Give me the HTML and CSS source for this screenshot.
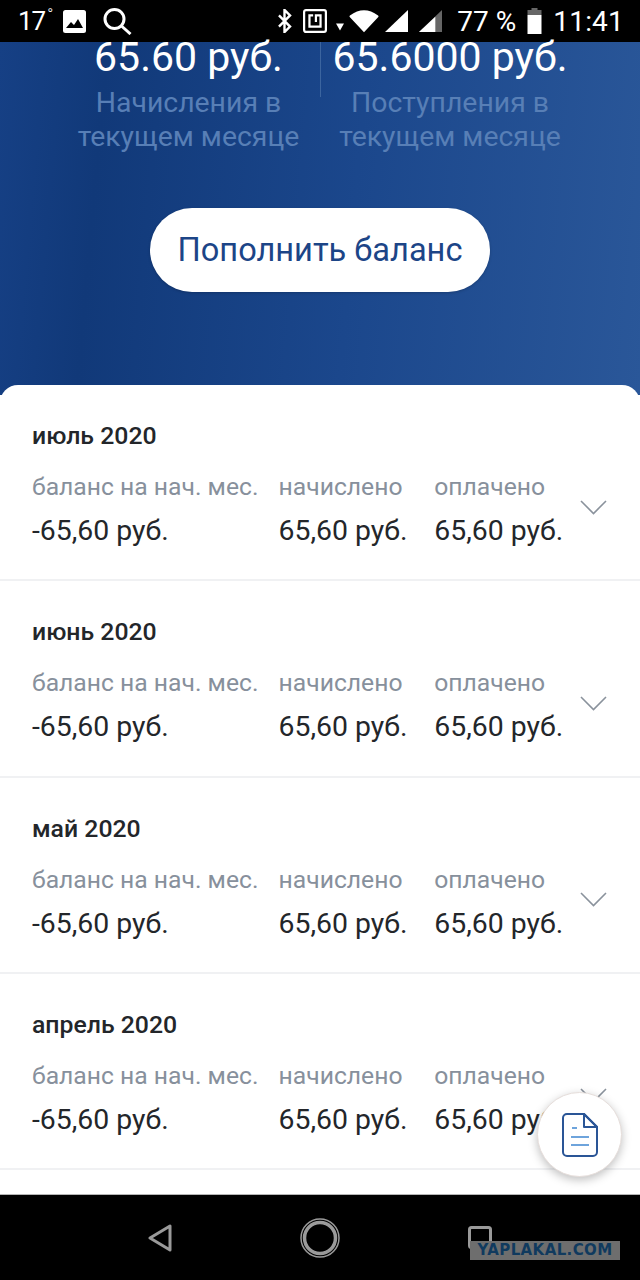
FILE: index.html
```html
<!DOCTYPE html>
<html lang="ru">
<head>
    <meta charset="UTF-8">
    <meta name="viewport" content="width=device-width, initial-scale=1.0">
    <title>Баланс</title>
    <link rel="stylesheet" href="styles.css">
</head>
<body>
<div class="phone">
    <div class="status-bar">
        <div class="status-left">
            <span class="temp">17<sup>°</sup></span>
            <svg width="23" height="23" viewBox="0 0 23 23"><rect width="23" height="23" rx="2.500" fill="#fff"/><path d="M3 18l5-6 3 3 4-6 5 9z" fill="#000"/></svg>
            <svg class="ic-search" width="29" height="27" viewBox="0 0 29 27" fill="none" stroke="#fff" stroke-width="3"><circle cx="11.500" cy="11" r="9.500"/><path d="M18.500 18l9 8"/></svg>
        </div>
        <div class="status-right">
            <svg class="ic-bt" width="15" height="24" viewBox="0 0 16 26" fill="none" stroke="#fff" stroke-width="2.600"><path d="M2 7l12 12-6 6V1l6 6L2 19"/></svg>
            <svg class="ic-nfc" width="24" height="24" viewBox="0 0 26 26" fill="none" stroke="#fff" stroke-width="2.400"><rect x="1.200" y="1.200" width="23.600" height="23.600" rx="2"/><path d="M11 7H7v12h12V7h-5v7"/></svg>
            <svg class="ic-drop" width="8" height="8" viewBox="0 0 9 8"><path d="M0 0h9L4.500 8z" fill="#fff"/></svg>
            <svg class="ic-wifi" width="30" height="24" viewBox="0 0 32 24"><path d="M1 6Q16-5 31 6q1 1 0 2L16 24 1 8q-1-1 0-2z" fill="#fff"/></svg>
            <svg class="ic-signal" width="23" height="22" viewBox="0 0 24 23"><path d="M24 0v23H0z" fill="#fff"/></svg>
            <svg class="ic-signal-2" width="23" height="22" viewBox="0 0 24 23"><path d="M24 0v23H0z" fill="#666"/><path d="M17 7v16H0z" fill="#fff"/></svg>
            <span class="battery-text">77 %</span>
            <svg class="ic-battery" width="15" height="26" viewBox="0 0 14 26"><path d="M4 0h6v2h4v5H0V2h4z" fill="#666"/><path d="M0 7h14v19H0z" fill="#fff"/></svg>
            <span class="clock">11:41</span>
        </div>
    </div>

    <section class="hero">
        <div class="totals">
            <div class="total">
                <div class="total-sum">65.60 руб.</div>
                <div class="total-label">Начисления в<br>текущем месяце</div>
            </div>
            <div class="total total-right">
                <div class="total-sum">65.6000 руб.</div>
                <div class="total-label">Поступления в<br>текущем месяце</div>
            </div>
        </div>
        <a class="btn-topup">Пополнить баланс</a>
    </section>

    <main class="months">
        <div class="month">
            <div class="month-title">июль 2020</div>
            <div class="month-row">
                <div class="cell"><span class="cell-label">баланс на нач. мес.</span><span class="cell-value">-65,60 руб.</span></div>
                <div class="cell"><span class="cell-label">начислено</span><span class="cell-value">65,60 руб.</span></div>
                <div class="cell"><span class="cell-label">оплачено</span><span class="cell-value">65,60 руб.</span></div>
                <svg class="chevron" width="27" height="15" viewBox="0 0 27 15" fill="none" stroke="#8a929c" stroke-width="1.600"><path d="M1 1l12.500 12.500L26 1"/></svg>
            </div>
        </div>
        <div class="month">
            <div class="month-title">июнь 2020</div>
            <div class="month-row">
                <div class="cell"><span class="cell-label">баланс на нач. мес.</span><span class="cell-value">-65,60 руб.</span></div>
                <div class="cell"><span class="cell-label">начислено</span><span class="cell-value">65,60 руб.</span></div>
                <div class="cell"><span class="cell-label">оплачено</span><span class="cell-value">65,60 руб.</span></div>
                <svg class="chevron" width="27" height="15" viewBox="0 0 27 15" fill="none" stroke="#8a929c" stroke-width="1.600"><path d="M1 1l12.500 12.500L26 1"/></svg>
            </div>
        </div>
        <div class="month">
            <div class="month-title">май 2020</div>
            <div class="month-row">
                <div class="cell"><span class="cell-label">баланс на нач. мес.</span><span class="cell-value">-65,60 руб.</span></div>
                <div class="cell"><span class="cell-label">начислено</span><span class="cell-value">65,60 руб.</span></div>
                <div class="cell"><span class="cell-label">оплачено</span><span class="cell-value">65,60 руб.</span></div>
                <svg class="chevron" width="27" height="15" viewBox="0 0 27 15" fill="none" stroke="#8a929c" stroke-width="1.600"><path d="M1 1l12.500 12.500L26 1"/></svg>
            </div>
        </div>
        <div class="month">
            <div class="month-title">апрель 2020</div>
            <div class="month-row">
                <div class="cell"><span class="cell-label">баланс на нач. мес.</span><span class="cell-value">-65,60 руб.</span></div>
                <div class="cell"><span class="cell-label">начислено</span><span class="cell-value">65,60 руб.</span></div>
                <div class="cell"><span class="cell-label">оплачено</span><span class="cell-value">65,60 руб.</span></div>
                <svg class="chevron" width="27" height="15" viewBox="0 0 27 15" fill="none" stroke="#8a929c" stroke-width="1.600"><path d="M1 1l12.500 12.500L26 1"/></svg>
            </div>
        </div>
    </main>

    <div class="fab">
        <svg width="36" height="44" viewBox="0 0 36 44" fill="none"><path d="M22 1H5a4 4 0 0 0-4 4v34a4 4 0 0 0 4 4h26a4 4 0 0 0 4-4V14z" stroke="#2a5596" stroke-width="2" stroke-linejoin="round"/><path d="M22 1v13h13z" stroke="#2a5596" stroke-width="2" stroke-linejoin="round"/><path d="M10 15h5M9 24h18M9 32h18" stroke="#6ea4dc" stroke-width="2"/></svg>
    </div>

    <nav class="nav-bar">
        <svg width="24" height="28" viewBox="0 0 24 28" fill="none" stroke="#9a9a9a" stroke-width="3" stroke-linejoin="round"><path d="M22 2v24L2 14z"/></svg>
        <svg width="40" height="40" viewBox="0 0 40 40" fill="none" stroke="#9a9a9a"><circle cx="20" cy="20" r="19" stroke-width="1.500"/><circle cx="20" cy="20" r="15.500" stroke-width="3.500"/></svg>
        <svg width="24" height="23" viewBox="0 0 24 23" fill="none" stroke="#9a9a9a" stroke-width="3"><rect x="1.500" y="1.500" width="21" height="20" rx="2"/></svg>
    </nav>
    <div class="watermark">YAPLAKAL.COM</div>
</div>
</body>
</html>
```

FILE: styles.css
```css
* {
    box-sizing: border-box;
}
body {
    margin: 0;
    font-family: Roboto, "Noto Sans", sans-serif;
    background-color: #fff;
}
.phone {
    position: relative;
    width: 640px;
    height: 1280px;
    display: flex;
    flex-direction: column;
    overflow: hidden;
}

/* status bar */
.status-bar {
    height: 42px;
    flex-shrink: 0;
    background-color: #000;
    color: #fff;
    display: flex;
    justify-content: space-between;
    align-items: center;
    padding: 0 16px 0 18px;
    font-size: 28px;
}
.status-left,
.status-right {
    display: flex;
    align-items: center;
}
.temp {
    width: 45px;
    font-size: 26px;
    letter-spacing: -1px;
}
.temp sup {
    font-size: 16px;
    line-height: 0;
    font-weight: 300;
    margin-left: 2px;
}
.ic-search {
    margin-left: 17px;
}
.ic-nfc {
    margin-left: 11px;
}
.ic-drop {
    margin: 12px 0 0 9px;
}
.ic-wifi {
    margin-left: 5px;
}
.ic-signal {
    margin-left: 6px;
}
.ic-signal-2 {
    margin-left: 11px;
}
.battery-text {
    margin-left: 15px;
}
.ic-battery {
    margin-left: 11px;
}
.clock {
    margin-left: 11px;
    letter-spacing: 0.2px;
}

/* hero */
.hero {
    height: 353px;
    margin-bottom: -10px;
    flex-shrink: 0;
    background: linear-gradient(95deg, #164085 0%, #113979 16%, #1b478c 55%, #2a5799 100%);
    display: flex;
    flex-direction: column;
    align-items: center;
}
.totals {
    width: 100%;
    display: flex;
    justify-content: center;
}
.total {
    width: 261px;
    text-align: center;
    padding-right: 2px;
}
.total-right {
    border-left: 1px solid #3c659f;
    height: 55px;
}
.total-sum {
    color: #fff;
    font-size: 41px;
    line-height: 30px;
}
.total-label {
    margin-top: 14px;
    color: #587fb6;
    font-size: 28.4px;
    line-height: 34px;
    white-space: nowrap;
}
.btn-topup {
    margin-top: 54px;
    width: 340px;
    height: 84px;
    border-radius: 42px;
    background-color: #fff;
    color: #1c4587;
    font-size: 32.6px;
    display: flex;
    align-items: center;
    justify-content: center;
    box-shadow: 0 1px 3px rgba(0, 0, 0, 0.2);
}

/* months */
.months {
    flex: 1;
    position: relative;
    background-color: #fff;
    border-radius: 18px 18px 0 0;
    overflow: hidden;
}
.month {
    height: 196.3px;
    padding: 34px 33px 0 32px;
    border-bottom: 2px solid #f0f1f3;
}
.month-title {
    color: #23262a;
    font-size: 24.8px;
    font-weight: 500;
    line-height: 34px;
}
.month-row {
    margin-top: 17px;
    display: flex;
    align-items: center;
}
.cell {
    display: flex;
    flex-direction: column;
}
.cell:nth-child(1) {
    width: 247px;
}
.cell:nth-child(2) {
    width: 156px;
}
.cell:nth-child(3) {
    width: 146px;
}
.cell-label {
    color: #87909c;
    font-size: 24.7px;
    line-height: 34px;
    white-space: nowrap;
}
.cell-value {
    margin-top: 9px;
    color: #23262a;
    font-size: 28.4px;
    line-height: 35px;
    white-space: nowrap;
}
.chevron {
    flex-shrink: 0;
    margin-bottom: 4px;
}

/* floating button */
.fab {
    position: absolute;
    left: 537px;
    top: 1092px;
    width: 85px;
    height: 85px;
    border-radius: 50%;
    background-color: #fff;
    border: 1px solid #e6dedb;
    box-shadow: 0 3px 10px rgba(0, 0, 0, 0.25);
    display: flex;
    align-items: center;
    justify-content: center;
}

/* bottom nav */
.nav-bar {
    height: 86px;
    flex-shrink: 0;
    background-color: #000;
    border-top: 1px solid #b5b5b5;
    display: flex;
    align-items: center;
    padding: 0 148px;
    justify-content: space-between;
}
.watermark {
    position: absolute;
    left: 470px;
    top: 1241px;
    width: 150px;
    height: 19px;
    background-color: #6e6e6e;
    color: #103a5e;
    font-family: "DejaVu Sans", sans-serif;
    font-size: 15px;
    font-weight: 700;
    letter-spacing: 0.4px;
    line-height: 19px;
    text-align: center;
}
```
